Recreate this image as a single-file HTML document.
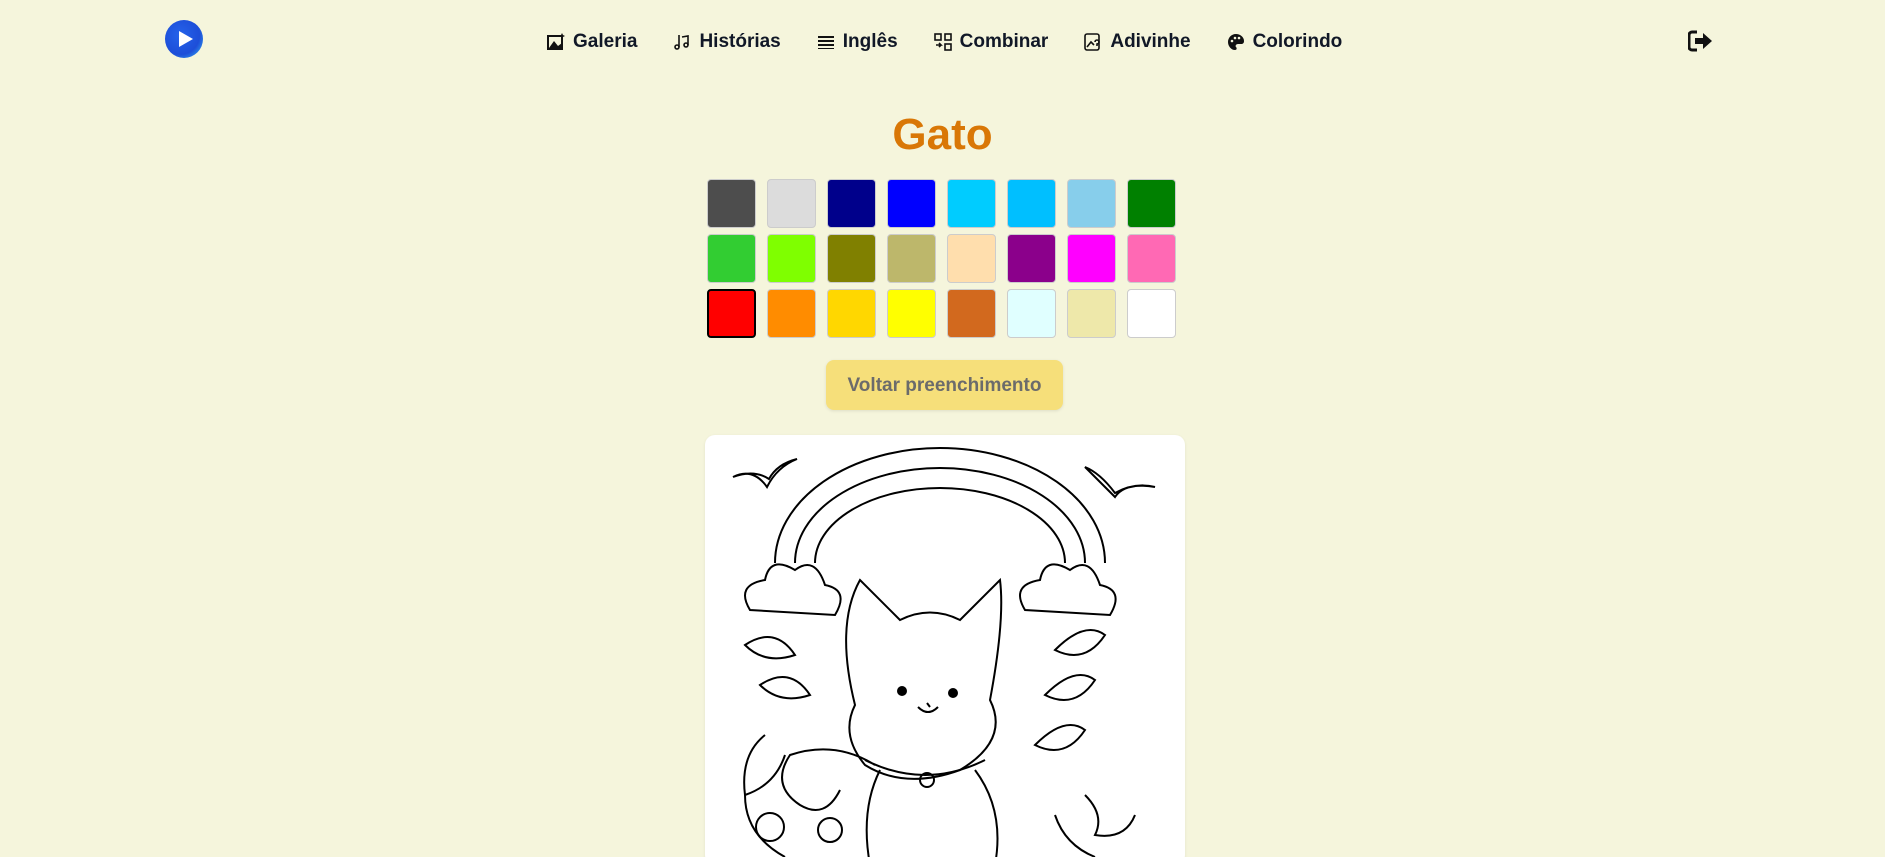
<!DOCTYPE html>
<html><head><meta charset="utf-8"><style>
html,body{margin:0;width:1885px;height:857px;overflow:hidden}
body{background:#f5f5dc;font-family:"Liberation Sans",sans-serif;position:relative}
.logo{position:absolute;left:165px;top:20px;width:38px;height:38px;border-radius:50%;background:radial-gradient(circle at 40% 40%,#2563eb,#1d4ed8 60%,#38bdf8)}
.items{position:absolute;left:547px;top:31px;display:flex;gap:36px;font-weight:bold;font-size:19px;color:#111827}
.items span{display:flex;align-items:center;gap:8px}
.items svg{width:18px;height:18px}
h1{position:absolute;top:110px;left:0;width:100%;text-align:center;margin:0;font-size:44px;color:#d97706;font-weight:bold}
.sw{position:absolute;width:47px;height:47px;border-radius:4px;border:1px solid #ccc}
.btn{position:absolute;left:826px;top:360px;width:237px;height:50px;border-radius:8px;background:#f6df7a;color:#6b6b6b;font-weight:bold;font-size:19px;text-align:center;line-height:52px;box-shadow:0 1px 3px rgba(0,0,0,.1)}
.card{position:absolute;left:705px;top:435px;width:480px;height:430px;background:#fff;border-radius:10px;box-shadow:0 1px 3px rgba(0,0,0,.08);overflow:hidden}
</style></head><body>
<div class="logo"><svg width="38" height="38"><path d="M14 11 L28 19 L14 27Z" fill="#fff"/></svg></div>
<div class="items">
<span><svg viewBox="0 0 18 18"><rect x="1" y="3" width="14" height="13" fill="none" stroke="#111" stroke-width="2"/><path d="M2 15 L7 8 L11 13 L15 10 V15Z" fill="#111"/><path d="M15 0 L16 2 L18 3 L16 4 L15 6 L14 4 L12 3 L14 2Z" fill="#111"/></svg>Galeria</span>
<span><svg viewBox="0 0 18 18" fill="none" stroke="#111" stroke-width="1.6"><circle cx="4" cy="14" r="2"/><path d="M6 14V2"/><circle cx="13" cy="12" r="2"/><path d="M15 12V3L9 4"/></svg>Histórias</span>
<span><svg viewBox="0 0 18 18" fill="#111"><rect x="1" y="3" width="16" height="2"/><rect x="1" y="7" width="16" height="2"/><rect x="1" y="11" width="16" height="2"/><rect x="1" y="15" width="16" height="1"/></svg>Inglês</span>
<span><svg viewBox="0 0 18 18" fill="none" stroke="#111" stroke-width="1.6"><rect x="1" y="1" width="6" height="6"/><rect x="11" y="1" width="6" height="6"/><rect x="11" y="11" width="6" height="6"/><path d="M2 12h5l-2-2M7 12l-2 2"/></svg>Combinar</span>
<span><svg viewBox="0 0 18 18" fill="none" stroke="#111" stroke-width="1.6"><rect x="1" y="1" width="14" height="16" rx="2"/><path d="M3 14l4-5 3 3"/><path d="M11 9a2 2 0 1 1 2 2v2"/></svg>Adivinhe</span>
<span><svg viewBox="0 0 18 18"><path d="M9 1C4 1 1 5 1 9s3 8 7 8c2 0 2-2 1-3s0-3 2-3h3c2 0 3-1 3-3 0-4-4-7-8-7z" fill="#111"/><circle cx="5" cy="8" r="1.3" fill="#f5f5dc"/><circle cx="8" cy="5" r="1.3" fill="#f5f5dc"/><circle cx="12" cy="5" r="1.3" fill="#f5f5dc"/></svg>Colorindo</span>
</div>
<svg style="position:absolute;left:1688px;top:30px" width="26" height="22" viewBox="0 0 26 22"><path d="M9 2H4a3 3 0 0 0-3 3v12a3 3 0 0 0 3 3h5" fill="none" stroke="#111" stroke-width="3"/><path d="M7 8h8V3l9 8-9 8v-5H7z" fill="#111"/></svg>
<h1>Gato</h1>
<div class="sw" style="left:707px;top:179px;background:#4d4d4d"></div>
<div class="sw" style="left:767px;top:179px;background:#dcdcdc"></div>
<div class="sw" style="left:827px;top:179px;background:#00008b"></div>
<div class="sw" style="left:887px;top:179px;background:#0000ff"></div>
<div class="sw" style="left:947px;top:179px;background:#00ccff"></div>
<div class="sw" style="left:1007px;top:179px;background:#00bfff"></div>
<div class="sw" style="left:1067px;top:179px;background:#87ceeb"></div>
<div class="sw" style="left:1127px;top:179px;background:#008000"></div>
<div class="sw" style="left:707px;top:234px;background:#32cd32"></div>
<div class="sw" style="left:767px;top:234px;background:#7fff00"></div>
<div class="sw" style="left:827px;top:234px;background:#808000"></div>
<div class="sw" style="left:887px;top:234px;background:#bdb76b"></div>
<div class="sw" style="left:947px;top:234px;background:#ffdead"></div>
<div class="sw" style="left:1007px;top:234px;background:#8b008b"></div>
<div class="sw" style="left:1067px;top:234px;background:#ff00ff"></div>
<div class="sw" style="left:1127px;top:234px;background:#ff69b4"></div>
<div class="sw" style="left:707px;top:289px;background:#ff0000;border:2px solid #000;width:45px;height:45px"></div>
<div class="sw" style="left:767px;top:289px;background:#ff8c00"></div>
<div class="sw" style="left:827px;top:289px;background:#ffd700"></div>
<div class="sw" style="left:887px;top:289px;background:#ffff00"></div>
<div class="sw" style="left:947px;top:289px;background:#d2691e"></div>
<div class="sw" style="left:1007px;top:289px;background:#e0ffff"></div>
<div class="sw" style="left:1067px;top:289px;background:#eee8aa"></div>
<div class="sw" style="left:1127px;top:289px;background:#ffffff"></div>
<div class="btn">Voltar preenchimento</div>
<div class="card"><svg width="480" height="430" viewBox="0 0 480 430" fill="none" stroke="#000" stroke-width="2">
<path d="M28 42 q20 -10 34 10 q10 -20 30 -28 q-20 5 -28 20 q-15 -10 -36 -2z"/>
<path d="M380 32 q20 20 30 30 q10 -15 40 -10 q-20 -5 -40 6 q-15 -20 -30 -26z"/>
<path d="M70 128 a165 115 0 0 1 330 0 M90 128 a145 95 0 0 1 290 0 M110 128 a125 75 0 0 1 250 0"/>
<path d="M45 175 q-15 -25 15 -30 q5 -25 30 -10 q20 -15 30 15 q25 5 10 30 z"/>
<path d="M320 175 q-15 -25 15 -30 q5 -25 30 -10 q20 -15 30 15 q25 5 10 30 z"/>
<path d="M150 270 q-20 -80 5 -125 q20 20 40 40 q30 -15 60 0 q25 -25 40 -40 q5 40 -10 120 q20 40 -30 70 q-55 20 -95 -5 q-25 -30 -10 -60z"/>
<circle cx="197" cy="256" r="4" fill="#000"/><circle cx="248" cy="258" r="4" fill="#000"/>
<path d="M213 272 q10 10 20 0 M222 268 l3 4"/>
<path d="M160 325 q60 30 120 0 M170 330 q-40 -25 -85 -10 q-20 30 10 50 q25 15 40 -15"/>
<path d="M175 335 q-20 40 -10 95 M270 335 q30 40 20 95"/>
<circle cx="222" cy="345" r="7"/>
<path d="M40 210 q30 -20 50 10 q-30 10 -50 -10z M55 250 q30 -20 50 10 q-30 10 -50 -10z M350 215 q30 -30 50 -15 q-20 30 -50 15z M340 260 q30 -30 50 -15 q-20 30 -50 15z M330 310 q30 -30 50 -15 q-20 30 -50 15z"/>
<path d="M60 300 q-25 20 -20 60 q30 -10 40 -40 M40 360 q0 40 40 62 M380 360 q20 20 10 40 q30 5 40 -20 M350 380 q10 30 40 42"/>
<circle cx="65" cy="392" r="14"/><circle cx="125" cy="395" r="12"/>
</svg></div>
</body></html>
